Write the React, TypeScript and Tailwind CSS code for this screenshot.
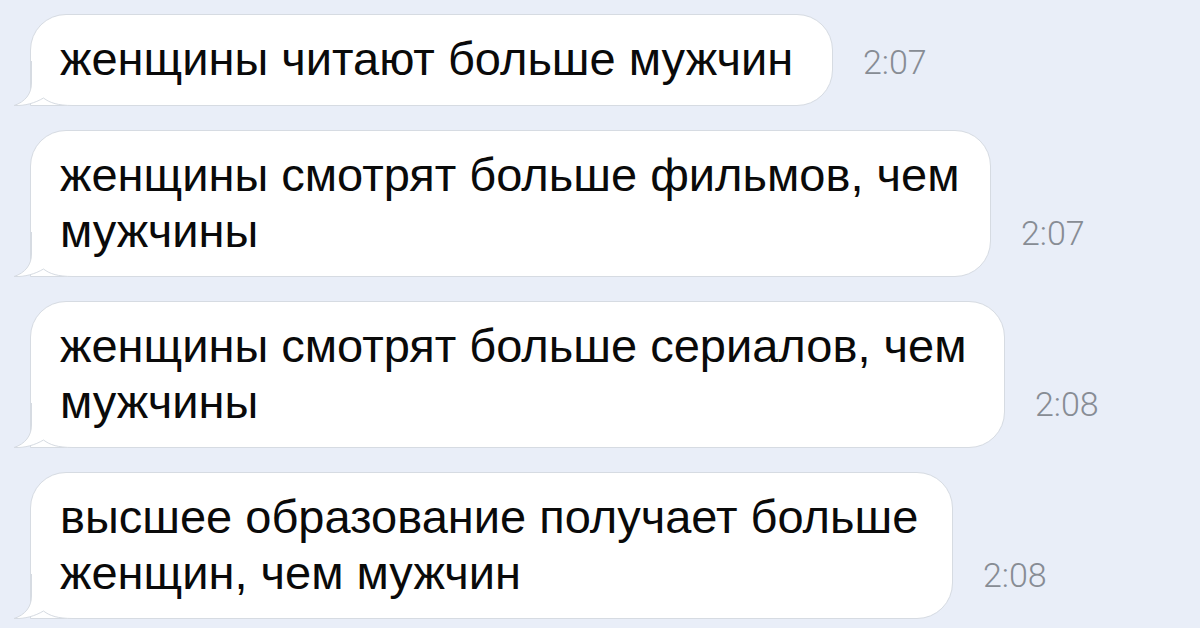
import React from 'react';

interface Message {
  lines: string[];
  time: string;
  width: number;
}

const messages: Message[] = [
  { lines: ['женщины читают больше мужчин'], time: '2:07', width: 803 },
  { lines: ['женщины смотрят больше фильмов, чем', 'мужчины'], time: '2:07', width: 961 },
  { lines: ['женщины смотрят больше сериалов, чем', 'мужчины'], time: '2:08', width: 975 },
  { lines: ['высшее образование получает больше', 'женщин, чем мужчин'], time: '2:08', width: 923 },
];

function Tail() {
  return (
    <svg
      className="absolute -left-[18px] -bottom-px"
      width="60"
      height="45"
      viewBox="0 0 60 45"
      fill="none"
    >
      <path
        d="M18.5 0 L18.5 22 C18.5 33 12 41 1 44.5 C12 45 22 42 30.5 37 C37 42 45 44.5 60 44.5 L60 0 Z"
        fill="#ffffff"
      />
      <path
        d="M18.5 0 L18.5 22 C18.5 33 12 41 1 44.5 C12 45 22 42 30.5 37 C37 42 45 44.5 60 44.5"
        stroke="#d6dbe2"
        strokeWidth="1"
      />
    </svg>
  );
}

function Bubble({ message }: { message: Message }) {
  const single = message.lines.length === 1;
  return (
    <div className="flex items-end">
      <div
        className={`relative bg-white border border-[#d6dbe2] rounded-[36px] rounded-bl-none pl-[29px] pr-[30px] pt-[16px] text-[47px] leading-[56px] text-[#0a0a0a] font-['Liberation_Sans',Arial,sans-serif] ${single ? 'pb-[18px]' : 'pb-[17px]'}`}
        style={{ width: message.width }}
      >
        <Tail />
        <div className="relative">
          {message.lines.map((line, i) => (
            <div key={i} className="whitespace-nowrap">{line}</div>
          ))}
        </div>
      </div>
      <span className="ml-[30px] mb-[27px] text-[34px] leading-none font-light text-[#878c94] font-['Roboto',sans-serif]">
        {message.time}
      </span>
    </div>
  );
}

export default function App() {
  return (
    <div className="w-[1200px] h-[628px] overflow-hidden bg-[#e9eef8] pl-[30px] pt-[14px]">
      <div className="flex flex-col gap-6">
        {messages.map((m, i) => (
          <Bubble key={i} message={m} />
        ))}
      </div>
    </div>
  );
}
